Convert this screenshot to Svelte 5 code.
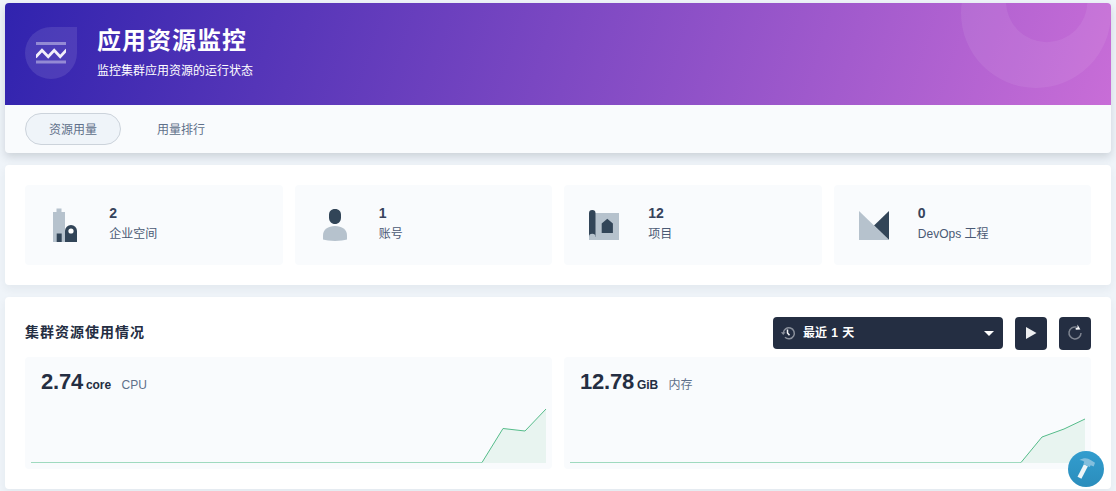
<script>
  const stats = [
    { icon: 'workspace', value: '2', label: '企业空间' },
    { icon: 'account', value: '1', label: '账号' },
    { icon: 'project', value: '12', label: '项目' },
    { icon: 'devops', value: '0', label: 'DevOps 工程' }
  ];
  const charts = [
    { value: '2.74', unit: 'core', name: 'CPU', points: '451,53.5 472,19.5 494,22 515,0' },
    { value: '12.78', unit: 'GiB', name: '内存', points: '451,53.5 472,28 494,20 515,10' }
  ];
</script>

<div class="page">
  <section class="card banner">
    <header>
      <svg class="rings" width="150" height="102" viewBox="0 0 150 102">
        <path fill="#fff" fill-opacity=".07" fill-rule="evenodd" d="M0 10a75 75 0 1 0 150 0a75 75 0 1 0-150 0zM45-1.5a40.7 40.7 0 1 0 81.4 0a40.7 40.7 0 1 0-81.4 0z" />
      </svg>
      <div class="badge">
        <svg class="wave" width="30" height="22" viewBox="0 0 30 22">
          <path fill="#fff" fill-opacity=".4" d="M0 0h30v3H0zM0 18.500h30v3H0z" />
          <path fill="none" stroke="#f2effa" stroke-width="2.8" d="M-.5 15.200 6 8.200l6.200 6.500 6-6.500 6 6.500 6.500-7" />
        </svg>
      </div>
      <div>
        <h1>应用资源监控</h1>
        <p>监控集群应用资源的运行状态</p>
      </div>
    </header>
    <nav>
      <a class="active">资源用量</a>
      <a>用量排行</a>
    </nav>
  </section>

  <section class="card stats">
    {#each stats as s}
      <div class="stat">
        <svg width="40" height="40" viewBox="0 0 40 40">
          {#if s.icon === 'workspace'}
            <path fill="#b6c2cd" d="M8 7h3.500V3.500h5V7H20v30H8z" />
            <path fill="#324558" d="M11.700 28.500h5V37h-5zM20 37V26a6 6 0 0 1 12 0v11z" />
            <circle cx="26" cy="26" r="2.600" fill="#fff" />
          {:else if s.icon === 'account'}
            <path fill="#324558" d="M20 4c4 0 6 2.500 6 6v2.500c0 4-2.500 6.500-6 6.500s-6-2.500-6-6.500V10c0-3.500 2-6 6-6z" />
            <path fill="#b6c2cd" d="M8 34.500v-4C8 24.500 13 21 20 21s12 3.500 12 9.500v4c-5 1.900-19 1.900-24 0z" />
          {:else if s.icon === 'project'}
            <path fill="#b6c2cd" d="M8 8h27v27H8z" />
            <path fill="#324558" d="M5 32V8.300a3.200 3.200 0 0 1 6.500 0V32zM17.700 28V18.500l5.600-4.800 5.600 4.800V28z" />
            <path fill="#b6c2cd" d="M5 35v-3a3.250 3.250 0 0 1 6.500 0v3z" />
          {:else}
            <path fill="#324558" d="M20 20.500 35 6v29z" />
            <path fill="#b6c2cd" d="M5 6l30 29H5z" />
          {/if}
        </svg>
        <div>
          <strong>{s.value}</strong>
          <span>{s.label}</span>
        </div>
      </div>
    {/each}
  </section>

  <section class="card usage">
    <div class="toolbar">
      <h2>集群资源使用情况</h2>
      <div class="select">
        <svg width="16" height="16" viewBox="0 0 16 16">
          <path fill="none" stroke="#8b919c" stroke-width="1.500" d="M3.300 8A5.500 5.500 0 1 1 5 12.300" />
          <path fill="#8b919c" d="M.8 7.300h4.800L3.300 10z" />
          <path fill="none" stroke="#f5f6f8" stroke-width="1.500" d="M7.500 4.500V8l2 2.200" />
        </svg>
        <span>最近 1 天</span>
        <svg width="10" height="5" viewBox="0 0 10 5"><path fill="#fff" d="M0 0h10L5 5z" /></svg>
      </div>
      <button aria-label="播放">
        <svg width="16" height="16" viewBox="0 0 16 16"><path fill="#eeeff1" d="M3 2l10.500 6L3 14z" /></svg>
      </button>
      <button aria-label="刷新">
        <svg width="16" height="16" viewBox="0 0 16 16">
          <path fill="none" stroke="#7f8591" stroke-width="1.500" d="M9.500 2.100A6 6 0 1 0 14 8" />
          <path fill="#f5f6f8" d="M10.500-.5l2.900 4.900-4.600.3-.2-1.600 1.900-.6z" />
        </svg>
      </button>
    </div>
    <div class="charts">
      {#each charts as c}
        <div class="chart">
          <div class="reading"><b>{c.value}</b><strong>{c.unit}</strong><span>{c.name}</span></div>
          <svg width="515" height="55" viewBox="0 0 515 55">
            <polygon points="{c.points} 515,54 451,54" fill="#e8f4f0" />
            <path d="M0 53.500h451" stroke="#9fdabf" />
            <polyline points={c.points} fill="none" stroke="#55bc8a" stroke-width="1" />
          </svg>
        </div>
      {/each}
    </div>
  </section>
</div>

<div class="tools">
  <svg width="36" height="36" viewBox="0 0 36 36">
    <path fill="#eef5f8" d="M15.900 13.300l4 1.900-6.500 12.500-3.900-1.900z" />
    <path fill="#83bfdd" d="M11.500 9c4-2.500 8-2.500 11.500.2l4 2.500-1.300 3.700-3-1.200-1 1.800-6.200-2.900.7-2.400c-1.600-1.200-3-1.600-4.700-1.700z" />
  </svg>
</div>

<style>
  :global(body) { background: #eff4f9; overflow: hidden; }
  .page {
    box-sizing: border-box;
    height: 491px;
    padding: 3px 5px 2px;
    display: flex;
    flex-direction: column;
    gap: 12px;
    font: 12px/20px "Liberation Sans", "Noto Sans CJK SC", sans-serif;
    color: #4a5974;
  }
  h1, h2, p { margin: 0; }
  svg { display: block; flex: none; overflow: visible; }
  .card {
    box-sizing: border-box;
    border-radius: 4px;
    background: #fff;
    box-shadow: 0 4px 8px rgba(36, 46, 66, .06);
  }
  .banner { height: 150px; overflow: hidden; background: #f9fbfd; box-shadow: 0 4px 8px rgba(36, 46, 66, .17); }
  header {
    position: relative;
    box-sizing: border-box;
    height: 102px;
    padding: 20px;
    display: flex;
    gap: 20px;
    color: #fff;
    background: linear-gradient(108deg, #3023ae 0%, #c86dd7 100%);
  }
  .rings { position: absolute; top: 0; right: 0; overflow: hidden; }
  .wave { overflow: hidden; }
  .badge {
    width: 52px;
    height: 52px;
    margin-top: 4px;
    border-radius: 50% 0 50% 50%;
    background: rgba(255, 255, 255, .1);
    display: flex;
    align-items: center;
    justify-content: center;
  }
  h1 { font-size: 24px; line-height: 32px; font-weight: 600; letter-spacing: 1px; margin-top: 2px; }
  p { margin-top: 4px; line-height: 20px; }
  nav { height: 48px; padding: 0 20px; display: flex; gap: 12px; align-items: center; color: #5f708a; }
  nav a { box-sizing: border-box; width: 96px; height: 32px; line-height: 32px; text-align: center; border: 1px solid transparent; border-radius: 16px; }
  nav .active { background: #eff4f9; border-color: #ccd3db; }
  .stats { height: 120px; padding: 20px; display: flex; gap: 12px; }
  .stat { flex: 1; display: flex; align-items: center; background: #f9fbfd; border-radius: 4px; padding-left: 20px; gap: 24.3px; }
  .stat strong, .stat span { display: block; }
  .stat strong { font-size: 14px; line-height: 20px; color: #36435c; margin-top: -3px; }
  .stat span { line-height: 20px; }
  .stat strong + span { margin-top: 1px; }
  .usage { height: 192px; padding: 20px; }
  .toolbar { display: flex; gap: 12px; height: 40px; align-items: flex-start; }
  h2 { flex: 1; font-size: 14px; line-height: 30px; font-weight: 600; letter-spacing: 1px; color: #242e42; }
  .select { box-sizing: border-box; width: 230px; height: 32px; padding: 0 9px 0 7px; background: #242e42; border-radius: 4px; color: #fff; display: flex; align-items: center; font-weight: 600; }
  .select span { flex: 1; margin-left: 7px; line-height: 30px; word-spacing: 1px; }
  button { width: 32px; height: 33px; padding: 0 0 1px; box-sizing: border-box; border: 0; border-radius: 4px; background: #242e42; display: flex; align-items: center; justify-content: center; }
  .charts { display: flex; gap: 12px; }
  .chart { box-sizing: border-box; flex: 1; height: 112px; padding: 8px 6px 0; background: #f9fbfd; border-radius: 4px; }
  .reading { height: 44px; padding-left: 10px; display: flex; align-items: baseline; color: #242e42; line-height: 34px; }
  .reading b { font-size: 22px; letter-spacing: -.2px; }
  .reading strong { margin-left: 3px; letter-spacing: -.1px; }
  .reading span { margin-left: 10.5px; color: #5f708a; }
  .tools { position: absolute; right: 12px; top: 451px; width: 36px; height: 36px; border-radius: 50%; background: linear-gradient(#329dce, #2b8dbc); }
</style>
